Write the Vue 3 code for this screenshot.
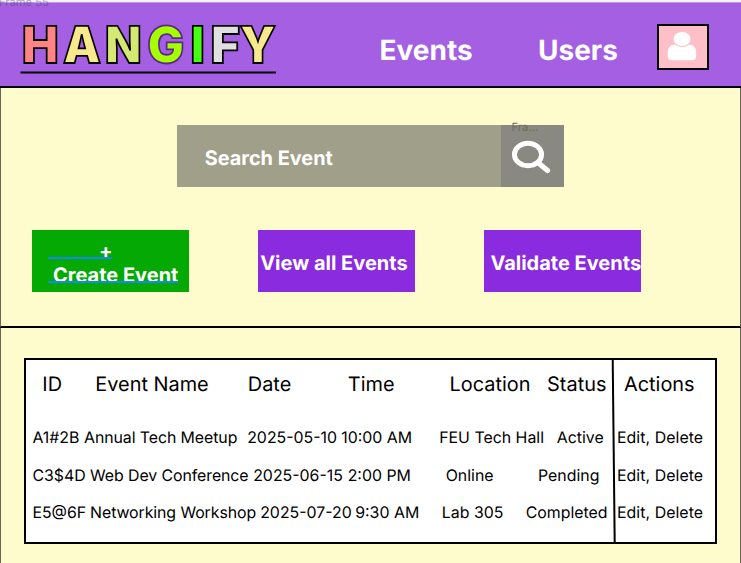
<script setup>
const letters = [
  { ch: 'H', x: 22, w: 36.6, fill: '#ff8585', stroke: '#000' },
  { ch: 'A', x: 63, w: 38, fill: '#f8ea8c', stroke: '#000' },
  { ch: 'N', x: 105, w: 36.6, fill: '#d4e872', stroke: '#000' },
  { ch: 'G', x: 147.2, w: 37, fill: '#a6ff00', stroke: '#5a2b86' },
  { ch: 'I', x: 190.6, w: 14.2, fill: '#46ff14', stroke: '#000' },
  { ch: 'F', x: 210.6, w: 29.6, fill: '#e0e0e0', stroke: '#000' },
  { ch: 'Y', x: 239.5, w: 36.5, fill: '#f8ea8c', stroke: '#000' }
]
const heads = ['ID', 'Event Name', 'Date', 'Time', 'Location', 'Status', 'Actions']
const events = [
  ['A1#2B', 'Annual Tech Meetup', '2025-05-10', '10:00 AM', 'FEU Tech Hall', 'Active'],
  ['C3$4D', 'Web Dev Conference', '2025-06-15', '2:00 PM', 'Online', 'Pending'],
  ['E5@6F', 'Networking Workshop', '2025-07-20', '9:30 AM', 'Lab 305', 'Completed']
]
</script>

<template>
  <div class="page">
    <div class="strip"></div>
    <span class="frame-label">Frame 55</span>
    <header class="top">
      <svg class="logo" width="290" height="83" viewBox="0 3 290 83">
        <text
          v-for="l in letters" :key="l.ch" :x="l.x" y="62.7" :textLength="l.w"
          lengthAdjust="spacingAndGlyphs" :fill="l.fill" :stroke="l.stroke"
        >{{ l.ch }}</text>
        <path d="M20.5 72.6H276" stroke="#000" stroke-width="2" />
      </svg>
      <a class="nav events">Events</a>
      <a class="nav users">Users</a>
      <div class="avatar">
        <svg width="48" height="42" viewBox="659 26 48 42" fill="#fff">
          <path d="M674 44.700C669.600 44.700 667.800 48.500 667.800 53.500V56.300C667.800 58.800 669.500 60.200 672 60.200H692C694.500 60.200 696.200 58.800 696.200 56.300V53.500C696.200 48.500 694.400 44.700 690 44.700C688 44.700 686.500 46.600 682 46.600C677.500 46.600 676 44.700 674 44.700Z" />
          <ellipse cx="682" cy="39" rx="9" ry="7.500" stroke="#ffbfc9" stroke-width="1" />
        </svg>
      </div>
    </header>

    <section class="controls">
      <div class="search">
        <div class="query">Search Event</div>
        <div class="go">
          <span class="tag">Fra...</span>
          <svg width="63" height="62" viewBox="501 125 63 62" fill="none" stroke="#fff">
            <ellipse cx="528" cy="154.500" rx="13.600" ry="11.200" stroke-width="5" />
            <path d="M539 163.500L547.500 170.500" stroke-width="5.200" stroke-linecap="round" />
          </svg>
        </div>
      </div>
      <div class="buttons">
        <div class="btn create">
          <div class="line plus">+</div>
          <div class="line label">Create Event</div>
        </div>
        <div class="btn view">View all Events</div>
        <div class="btn validate">Validate Events</div>
      </div>
    </section>

    <section class="listing">
      <div class="table">
        <div class="row head">
          <span v-for="h in heads" :key="h">{{ h }}</span>
        </div>
        <div v-for="(e, i) in events" :key="e[0]" class="row" :class="'r' + (i + 1)">
          <span v-for="c in e" :key="c">{{ c }}</span>
          <span>Edit, Delete</span>
        </div>
        <svg class="divider" width="6" height="184" viewBox="0 0 6 184">
          <path d="M1.700 0L3.700 184" stroke="#000" stroke-width="2" />
        </svg>
      </div>
    </section>
  </div>
</template>

<style>
body { margin: 0; }
</style>

<style scoped>
.page {
  position: relative;
  box-sizing: border-box;
  width: 741px;
  height: 563px;
  overflow: hidden;
  background: #fefbcc;
  font-family: Inter, "Liberation Sans", sans-serif;
  color: #000;
  text-rendering: geometricPrecision;
}
.strip { height: 2px; background: #f4f1f7; border-bottom: 1px solid #c39ae9; }
.frame-label {
  position: absolute;
  left: -1px;
  top: -5px;
  font-size: 11.200px;
  line-height: 14px;
  color: rgba(60, 50, 70, .4);
}
.top {
  display: flex;
  height: 83px;
  background: #a55fe3;
  border-bottom: 2px solid #000;
}
.logo { flex: none; }
.logo text { font-size: 51px; font-weight: 900; stroke-width: 1.8px; }
.nav { color: #fff; font-size: 28px; font-weight: 700; line-height: 34px; margin-top: 30px; }
.events { width: 158.500px; margin-left: 89.500px; }
.users { width: 119px; }
.avatar {
  box-sizing: border-box;
  width: 52px;
  height: 46px;
  margin-top: 21px;
  border: 2px solid #000;
  background: #ffbfc9;
}
.avatar svg { display: block; }
.controls {
  box-sizing: border-box;
  height: 240px;
  padding-top: 37px;
  border-bottom: 2px solid #000;
  border-left: 1px solid #66655a;
  border-right: 1px solid #66655a;
}
.search { display: flex; width: 387px; height: 62px; margin-left: 176px; }
.query {
  box-sizing: border-box;
  width: 324px;
  padding: 21px 0 0 27.700px;
  background: #a09f89;
  color: #fff;
  font-size: 19.900px;
  font-weight: 700;
  line-height: 24px;
}
.go { position: relative; width: 63px; background: #898881; }
.go svg { display: block; }
.tag { position: absolute; left: 10.500px; top: -5px; font-size: 11.300px; line-height: 14px; color: #6e6d64; }
.buttons { display: flex; gap: 69.200px; margin: 43px 0 0 31px; }
.btn {
  box-sizing: border-box;
  width: 157px;
  height: 62px;
  background: #8a2be0;
  color: #fff;
  font-size: 20px;
  font-weight: 700;
  line-height: 24px;
  white-space: nowrap;
}
.view { padding: 21px 0 0 2px; }
.validate { padding: 21px 0 0 6px; }
.create { padding: 5px 0 0 16px; background: #04a904; }
.line { box-sizing: border-box; height: 24px; overflow: hidden; border-bottom: 2px solid #138af2; }
.plus { width: 64px; padding: 4px 0 0 51px; }
.label { width: 130px; padding: 4px 0 0 5px; }
.listing {
  height: 236px;
  padding-top: 30px;
  border-left: 1px solid #66655a;
  border-right: 1px solid #66655a;
}
.table {
  position: relative;
  box-sizing: border-box;
  width: 693px;
  height: 186px;
  margin-left: 23px;
  padding-top: 12px;
  border: 2px solid #000;
  background: #fff;
}
.row { display: grid; height: 37.500px; font-size: 15.900px; line-height: 20px; white-space: nowrap; }
.row:not(.head) span:nth-child(2) { letter-spacing: -.09px; }
.row:not(.head) span:last-child { letter-spacing: .05px; }
.head {
  height: 56px;
  padding-left: 16.300px;
  font-size: 19.900px;
  line-height: 24px;
  grid-template-columns: 53px 152.500px 100px 101.800px 97.500px 76.900px 80px;
}
.r1, .r2, .r3 { padding-left: 6.400px; }
.r1 { grid-template-columns: 51.700px 163.100px 94px 98px 117.500px 60.300px 90px; }
.r2 { grid-template-columns: 57.700px 163.100px 94.500px 98px 92.300px 79px 90px; }
.r3 { grid-template-columns: 57.700px 170.100px 95px 86.700px 83.800px 91.300px 90px; }
.divider { position: absolute; left: 585px; top: -1px; }
</style>
